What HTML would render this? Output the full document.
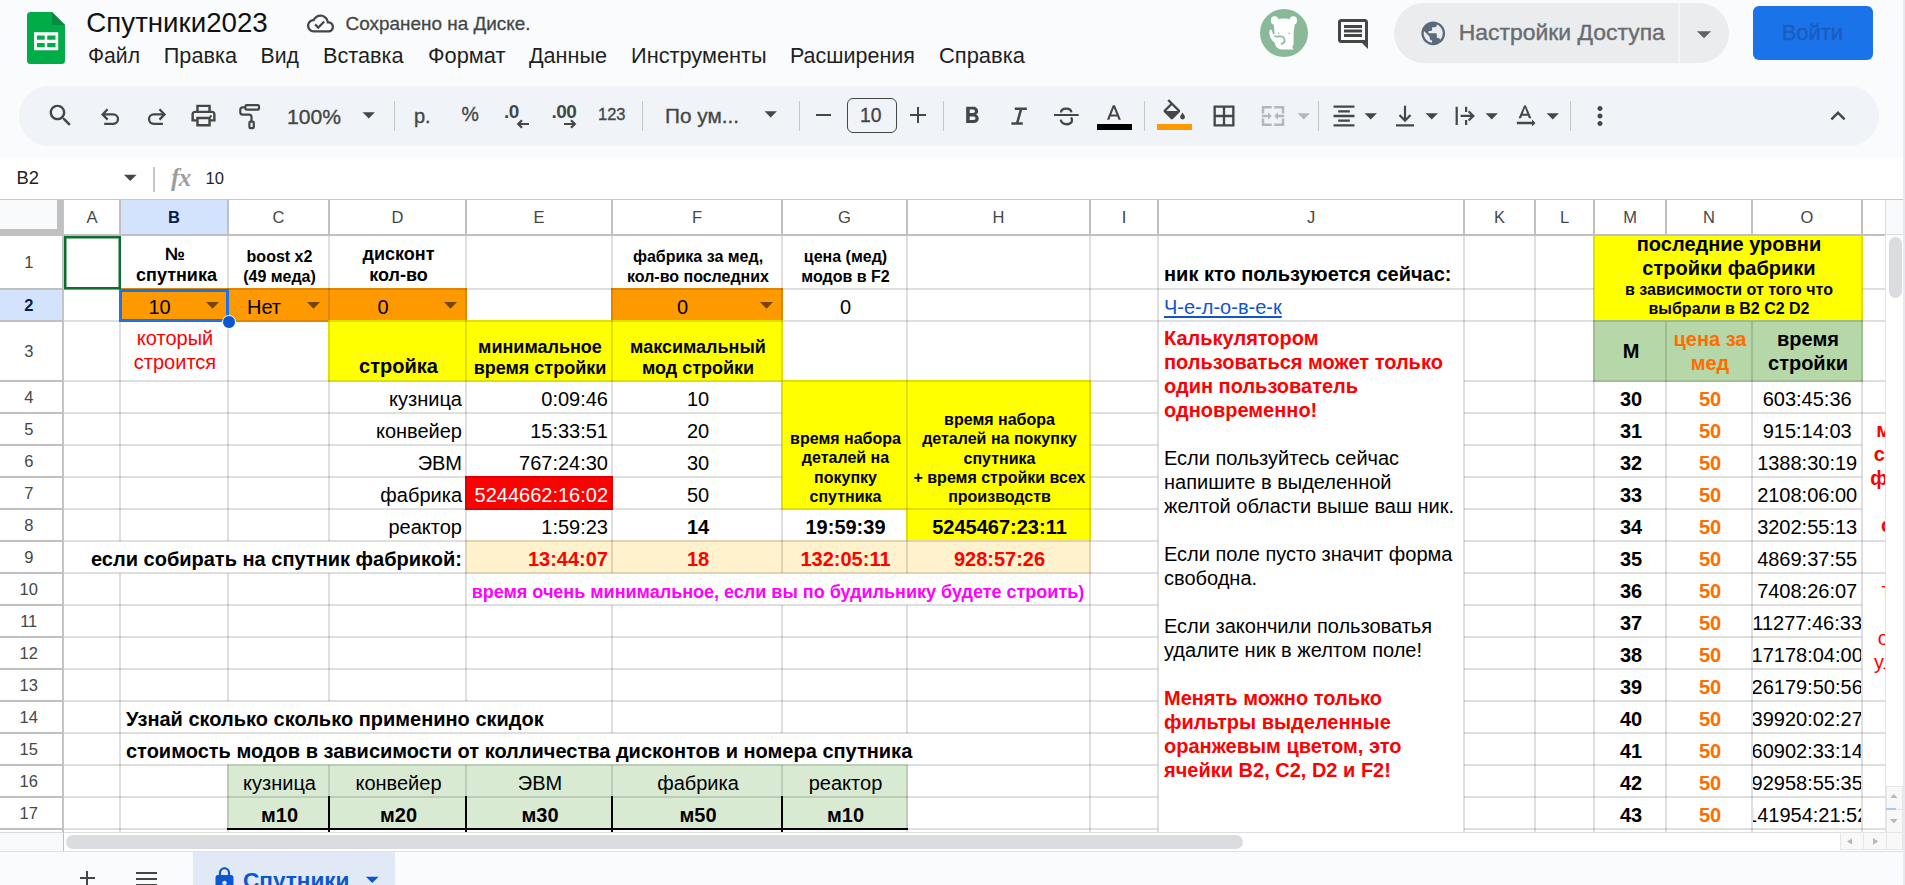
<!DOCTYPE html><html lang="ru"><head><meta charset="utf-8"><title>Спутники2023 - Google Таблицы</title><style>
html,body{margin:0;padding:0}
body{width:1905px;height:885px;overflow:hidden;background:#f9fbfd;position:relative;font-family:"Liberation Sans",sans-serif;color:#1f1f1f}
div,svg{position:absolute;box-sizing:border-box}
.t{white-space:nowrap;overflow:visible}
.g{background:rgba(0,0,0,.125)}
.hl{background:#c0c0c0}
#grid{left:0;top:0;width:1885px;height:832px;overflow:hidden}
</style></head><body>
<svg class="i" style="left:27px;top:12px" width="38" height="52" viewBox="0 0 38 52">
<path d="M3.5 0H25L38 13V48.5A3.5 3.5 0 0 1 34.5 52H3.5A3.5 3.5 0 0 1 0 48.5V3.5A3.5 3.5 0 0 1 3.5 0Z" fill="#00ac47"/>
<path d="M25 0L38 13H25Z" fill="#098a3c"/>
<path d="M7 20.2H31.2V38.2H7Z M9.9 23.4V27.7H17.7V23.4Z M20.2 23.4V27.7H28.5V23.4Z M9.9 31V35.3H17.7V31Z M20.2 31V35.3H28.5V31Z" fill="#fff" fill-rule="evenodd"/>
</svg>
<div class="t" style="left:86.3px;top:7px;height:31px;line-height:31px;font-size:27.7px;color:#111;white-space:nowrap;">Спутники2023</div>
<svg class="i" style="left:306.5px;top:9.5px;" width="27" height="27" viewBox="0 0 24 24" fill="#444746"><path d="M19.35 10.04C18.67 6.59 15.64 4 12 4 9.11 4 6.6 5.64 5.35 8.04 2.34 8.36 0 10.91 0 14c0 3.31 2.69 6 6 6h13c2.76 0 5-2.24 5-5 0-2.64-2.05-4.78-4.65-4.96zM19 18H6c-2.21 0-4-1.79-4-4 0-2.05 1.53-3.76 3.56-3.97l1.07-.11.5-.95C8.08 7.14 9.94 6 12 6c2.62 0 4.88 1.86 5.39 4.43l.3 1.5 1.53.11c1.56.1 2.78 1.41 2.78 2.96 0 1.65-1.35 3-3 3zm-9-3.82l-2.09-2.09L6.5 13.5 10 17l6.01-6.01-1.41-1.41z"/></svg>
<div class="t" style="left:345.6px;top:13px;height:21px;line-height:21px;font-size:18.91px;color:#444746;white-space:nowrap;-webkit-text-stroke:0.3px #444746;">Сохранено на Диске.</div>
<div class="t" style="left:88px;top:44px;height:23px;line-height:23px;font-size:21.15px;color:#1f1f1f;white-space:nowrap;">Файл</div>
<div class="t" style="left:163.8px;top:43px;height:25px;line-height:25px;font-size:21.67px;color:#1f1f1f;white-space:nowrap;">Правка</div>
<div class="t" style="left:260.6px;top:44px;height:23px;line-height:23px;font-size:21.23px;color:#1f1f1f;white-space:nowrap;">Вид</div>
<div class="t" style="left:323px;top:43px;height:25px;line-height:25px;font-size:21.71px;color:#1f1f1f;white-space:nowrap;">Вставка</div>
<div class="t" style="left:428px;top:43px;height:25px;line-height:25px;font-size:21.82px;color:#1f1f1f;white-space:nowrap;">Формат</div>
<div class="t" style="left:529px;top:43px;height:25px;line-height:25px;font-size:21.59px;color:#1f1f1f;white-space:nowrap;">Данные</div>
<div class="t" style="left:631px;top:43px;height:25px;line-height:25px;font-size:21.75px;color:#1f1f1f;white-space:nowrap;">Инструменты</div>
<div class="t" style="left:790px;top:44px;height:24px;line-height:24px;font-size:21.49px;color:#1f1f1f;white-space:nowrap;">Расширения</div>
<div class="t" style="left:939px;top:43px;height:25px;line-height:25px;font-size:21.92px;color:#1f1f1f;white-space:nowrap;">Справка</div>
<svg class="i" style="left:1260px;top:9px" width="48" height="48" viewBox="0 0 48 48">
<circle cx="24" cy="24" r="24" fill="#8ab99a"/>
<g fill="#fff">
<ellipse cx="14.6" cy="11.400" rx="3.700" ry="4.200"/><ellipse cx="33.300" cy="11.400" rx="3.700" ry="4.200"/>
<path d="M13.5 13.5C16 8.300 31.5 8.300 34 13.5C35.5 18 33.6 20 33.6 24V34.5C33.6 36 32.6 36.6 32.4 37.6C32.2 38.8 33.6 39.4 33.4 40.6H22C17 40 15.4 37 14.6 33.5C10.5 31 8.6 25.5 9.6 21.6C10.2 20 12.2 20.6 12.2 22.2C12.6 25.5 14.6 26.6 14.6 24Z"/>
</g>
<path d="M15 27.2C18 28.6 20 26.2 22.6 27.8C25.4 29.6 25.6 33.6 21.4 35" fill="none" stroke="#8ab99a" stroke-width="1.7" stroke-linecap="round"/>
<circle cx="18.6" cy="24.2" r=".8" fill="#8ab99a"/><circle cx="29.2" cy="24.2" r=".8" fill="#8ab99a"/>
</svg>
<svg class="i" style="left:1335px;top:16px;" width="36" height="36" viewBox="0 0 24 24" fill="#444746"><path d="M21.99 4c0-1.1-.89-2-1.99-2H4c-1.1 0-2 .9-2 2v12c0 1.1.9 2 2 2h14l4 4-.01-18zM20 4v12H4V4h16zM6 12h12v2H6zm0-3h12v2H6zm0-3h12v2H6z"/></svg>
<div style="left:1394px;top:3px;width:335px;height:60px;background:#ebecee;border-radius:30px"></div>
<div style="left:1678px;top:3px;width:1.5px;height:60px;background:#f4f5f7"></div>
<svg class="i" style="left:1418.75px;top:18.75px;" width="28.5" height="28.5" viewBox="0 0 24 24" fill="#5a6a7d"><path d="M12 2C6.48 2 2 6.48 2 12s4.48 10 10 10 10-4.48 10-10S17.52 2 12 2zm-1 17.93c-3.95-.49-7-3.85-7-7.93 0-.62.08-1.21.21-1.79L9 15v1c0 1.1.9 2 2 2v1.93zm6.9-2.54c-.26-.81-1-1.39-1.9-1.39h-1v-3c0-.55-.45-1-1-1H8v-2h2c.55 0 1-.45 1-1V7h2c1.1 0 2-.9 2-2v-.41c2.93 1.19 5 4.06 5 7.41 0 2.08-.8 3.97-2.1 5.39z"/></svg>
<div class="t" style="left:1458.8px;top:19px;height:26px;line-height:26px;font-size:22.91px;color:#696c70;white-space:nowrap;-webkit-text-stroke:0.4px #696c70;">Настройки Доступа</div>
<svg class="i" style="left:1687.0px;top:16.5px;" width="34" height="34" viewBox="0 0 24 24" fill="#5f6368"><path d="M7 10l5 5 5-5z"/></svg>
<div style="left:1753px;top:6px;width:120px;height:54px;background:#1a73e8;border-radius:6px"></div>
<div class="t" style="left:1781.7px;top:20px;height:25px;line-height:25px;font-size:21.91px;color:#1b5bc4;white-space:nowrap;-webkit-text-stroke:0.4px #1b5bc4;">Войти</div>
<div style="left:19px;top:86px;width:1860px;height:60px;background:#f0f4f9;border-radius:30px"></div>
<svg class="i" style="left:46.0px;top:101.0px;" width="29" height="29" viewBox="0 0 24 24" fill="#444746"><path d="M15.5 14h-.79l-.28-.27C15.41 12.59 16 11.11 16 9.5 16 5.91 13.09 3 9.5 3S3 5.91 3 9.5 5.91 16 9.5 16c1.61 0 3.09-.59 4.23-1.57l.27.28v.79l5 4.99L20.49 19l-4.99-5zm-6 0C7.01 14 5 11.99 5 9.5S7.01 5 9.5 5 14 7.01 14 9.5 11.99 14 9.5 14z"/></svg>
<svg class="i" style="left:95px;top:100px" width="30" height="32" viewBox="95 100 30 32"><g fill="none" stroke="#444746" stroke-width="2.3"><path d="M107.6 109.2L102.6 114.4l5 5.2"/><path d="M102.8 114.4H113.3a4.7 4.7 0 0 1 0 9.4H104.2"/></g></svg>
<svg class="i" style="left:142px;top:100px" width="30" height="32" viewBox="142 100 30 32"><g fill="none" stroke="#444746" stroke-width="2.3"><path d="M159.5 109.2L164.5 114.4l-5 5.2"/><path d="M164.300 114.4H153.7a4.7 4.7 0 0 0 0 9.4H162.900"/></g></svg>
<svg class="i" style="left:189.0px;top:100.7px;" width="29" height="29" viewBox="0 0 24 24" fill="#444746"><path d="M19 8h-1V3H6v5H5c-1.66 0-3 1.34-3 3v6h4v4h12v-4h4v-6c0-1.66-1.34-3-3-3zM8 5h8v3H8V5zm8 12v2H8v-4h8v2zm2-2v-2H6v2H4v-4c0-.55.45-1 1-1h14c.55 0 1 .45 1 1v4h-2z M18 11.5a1 1 0 1 0 .001 0z"/></svg>
<svg class="i" style="left:236px;top:100px" width="30" height="32" viewBox="236 100 30 32"><g fill="none" stroke="#444746" stroke-width="2.2"><rect x="245.400" y="105.100" width="13.600" height="4.600" rx="1.300"/><path d="M245.400 107.400H242.700a2.400 2.400 0 0 0 -2.400 2.400v2.500a2.400 2.400 0 0 0 2.400 2.400H249.100a2.400 2.400 0 0 1 2.400 2.400V121"/><rect x="249.400" y="121.600" width="4.400" height="6.500" rx="1.100"/></g></svg>
<div class="t" style="left:287px;top:105px;height:23px;line-height:23px;font-size:21.11px;color:#444746;white-space:nowrap;-webkit-text-stroke:0.35px #444746;">100%</div>
<svg class="i" style="left:354.25px;top:99.75px;" width="29.5" height="29.5" viewBox="0 0 24 24" fill="#444746"><path d="M7 10l5 5 5-5z"/></svg>
<div style="left:394.0px;top:101px;width:1.0px;height:30px;background:#c7c7c7"></div>
<div class="t" style="left:414px;top:105px;height:22px;line-height:22px;font-size:20px;color:#444746;white-space:nowrap;-webkit-text-stroke:0.35px #444746;">р.</div>
<div class="t" style="left:461.4px;top:103px;height:22px;line-height:22px;font-size:19.5px;color:#444746;white-space:nowrap;-webkit-text-stroke:0.35px #444746;">%</div>
<div class="t" style="left:504px;top:101px;height:21px;line-height:21px;font-size:19px;color:#444746;white-space:nowrap;font-weight:700;letter-spacing:-0.5px;">.0</div>
<svg class="i" style="left:516px;top:118px" width="14" height="12" viewBox="0 0 14 12"><path d="M13 6H2.5M6 2.2L2.2 6 6 9.8" fill="none" stroke="#444746" stroke-width="2.200"/></svg>
<div class="t" style="left:551.5px;top:101px;height:21px;line-height:21px;font-size:19px;color:#444746;white-space:nowrap;font-weight:700;letter-spacing:-0.5px;">.00</div>
<svg class="i" style="left:563px;top:118px" width="14" height="12" viewBox="0 0 14 12"><path d="M1 6H11.5M8 2.2L11.8 6 8 9.8" fill="none" stroke="#444746" stroke-width="2.200"/></svg>
<div class="t" style="left:598px;top:105px;height:18px;line-height:18px;font-size:16.48px;color:#444746;white-space:nowrap;-webkit-text-stroke:0.35px #444746;">123</div>
<div style="left:642.0px;top:101px;width:1.0px;height:30px;background:#c7c7c7"></div>
<div class="t" style="left:665px;top:104px;height:23px;line-height:23px;font-size:20.77px;color:#444746;white-space:nowrap;-webkit-text-stroke:0.35px #444746;">По ум...</div>
<svg class="i" style="left:756.25px;top:98.75px;" width="29.5" height="29.5" viewBox="0 0 24 24" fill="#444746"><path d="M7 10l5 5 5-5z"/></svg>
<div style="left:799.0px;top:101px;width:1.0px;height:30px;background:#c7c7c7"></div>
<div style="left:815.5px;top:114px;width:15.0px;height:2px;background:#444746"></div>
<div style="left:847px;top:98px;width:50px;height:35px;border:1.5px solid #444746;border-radius:6px"></div>
<div class="t" style="left:860px;top:105px;height:21px;line-height:21px;font-size:19.33px;color:#444746;white-space:nowrap;-webkit-text-stroke:0.35px #444746;">10</div>
<div style="left:910px;top:114px;width:16px;height:2px;background:#444746"></div>
<div style="left:917px;top:107px;width:2px;height:16px;background:#444746"></div>
<div style="left:943.0px;top:101px;width:1.0px;height:30px;background:#c7c7c7"></div>
<svg class="i" style="left:957.5px;top:101.5px;" width="28" height="28" viewBox="0 0 24 24" fill="#444746"><path d="M15.6 10.79c.97-.67 1.65-1.77 1.65-2.79 0-2.26-1.75-4-4-4H7v14h7.04c2.09 0 3.71-1.7 3.71-3.79 0-1.52-.86-2.82-2.15-3.42zM10 6.5h3c.83 0 1.5.67 1.5 1.5s-.67 1.5-1.5 1.5h-3v-3zm3.500 9H10v-3h3.5c.83 0 1.500.67 1.500 1.500s-.67 1.500-1.500 1.500z"/></svg>
<svg class="i" style="left:1005px;top:100px" width="30" height="32" viewBox="1005 100 30 32"><g fill="none" stroke="#444746" stroke-width="2.5"><path d="M1014.800 108.700H1026.800M1011.400 123.600H1022.800M1021.200 108.700L1017 123.600"/></g></svg>
<svg class="i" style="left:1050px;top:100px" width="32" height="32" viewBox="1050 100 32 32"><g fill="none" stroke="#444746" stroke-width="2.300"><path d="M1054 115H1078.700" stroke-width="2"/><path d="M1071.400 112.300C1071 107.300 1061.300 107.300 1061 112.500"/><path d="M1060.800 119.700C1061.200 125.700 1072 125.700 1072 120.200C1072 119 1071.600 118.200 1071 117.500"/></g></svg>
<svg class="i" style="left:1100.7px;top:102.300px" width="25.800" height="25" viewBox="0 0 24 24" preserveAspectRatio="none" fill="#444746"><path d="M11 3L5.5 17h2.250l1.120-3h6.250l1.120 3h2.250L13 3h-2zm-1.380 9L12 5.670 14.380 12H9.620z"/></svg>
<div style="left:1097px;top:124px;width:35px;height:6px;background:#000"></div>
<div style="left:1144.0px;top:101px;width:1.0px;height:30px;background:#c7c7c7"></div>
<svg class="i" style="left:1159.7px;top:98.4px;" width="28.5" height="28.5" viewBox="0 -1 24 24" fill="#444746"><path d="M16.560 8.940L7.620 0 6.210 1.410l2.380 2.380-5.150 5.150c-.590.590-.590 1.540 0 2.120l5.500 5.500c.290.290.680.440 1.060.440s.770-.150 1.060-.440l5.500-5.500c.590-.580.590-1.530 0-2.120zM5.210 10L10 5.210 14.790 10H5.210zM19 11.500s-2 2.170-2 3.500c0 1.100.900 2 2 2s2-.900 2-2c0-1.330-2-3.500-2-3.500z"/></svg>
<div style="left:1157px;top:124px;width:35px;height:6px;background:#ff9900"></div>
<svg class="i" style="left:1210.0px;top:102.0px;" width="28" height="28" viewBox="0 0 24 24" fill="#444746"><path d="M3 3v18h18V3H3zm8 16H5v-6h6v6zm0-8H5V5h6v6zm8 8h-6v-6h6v6zm0-8h-6V5h6v6z"/></svg>
<svg class="i" style="left:1258.0px;top:101.0px;" width="30" height="30" viewBox="0 0 24 24" fill="#b4b8bd"><path d="M5 10H3V4h8v2H5v4zm14 8h-6v2h8v-6h-2v4zM5 18v-4H3v6h8v-2H5zM21 4h-8v2h6v4h2V4zM8 13v2l3-3-3-3v2H3v2h5zm8-2V9l-3 3 3 3v-2h5v-2h-5z"/></svg>
<svg class="i" style="left:1288.75px;top:100.75px;" width="29.5" height="29.5" viewBox="0 0 24 24" fill="#b4b8bd"><path d="M7 10l5 5 5-5z"/></svg>
<div style="left:1318.0px;top:101px;width:1.0px;height:30px;background:#c7c7c7"></div>
<svg class="i" style="left:1330.0px;top:102.0px;" width="28" height="28" viewBox="0 0 24 24" fill="#444746"><path d="M7 15v2h10v-2H7zm-4 6h18v-2H3v2zm0-8h18v-2H3v2zm4-6v2h10V7H7zM3 3v2h18V3H3z"/></svg>
<svg class="i" style="left:1356.25px;top:100.75px;" width="29.5" height="29.5" viewBox="0 0 24 24" fill="#444746"><path d="M7 10l5 5 5-5z"/></svg>
<svg class="i" style="left:1390px;top:100px" width="30" height="32" viewBox="1390 100 30 32"><g fill="none" stroke="#444746" stroke-width="2.200"><path d="M1405 105.700V120.500M1399.500 115L1405 120.700 1410.500 115M1396 125.300H1414"/></g></svg>
<svg class="i" style="left:1417.25px;top:100.75px;" width="29.5" height="29.5" viewBox="0 0 24 24" fill="#444746"><path d="M7 10l5 5 5-5z"/></svg>
<svg class="i" style="left:1450px;top:100px" width="30" height="32" viewBox="1450 100 30 32"><g fill="none" stroke="#444746" stroke-width="2.200"><path d="M1456.700 106.800V124.900M1466.100 106.800V112M1466.100 119.900V124.900M1460.600 115.900H1473M1468.600 111.300L1473.300 115.900 1468.600 120.500"/></g></svg>
<svg class="i" style="left:1477.25px;top:100.75px;" width="29.5" height="29.5" viewBox="0 0 24 24" fill="#444746"><path d="M7 10l5 5 5-5z"/></svg>
<svg class="i" style="left:1511.0px;top:102.0px;" width="28" height="28" viewBox="0 0 24 24" fill="#444746"><path d="M21 18l-3-3v2H5v2h13v2l3-3zM9.500 11.800h5l.900 2.200h2.100L12.750 3h-1.500L6.500 14h2.100l.900-2.200zM12 4.980L13.870 10h-3.740L12 4.980z"/></svg>
<svg class="i" style="left:1538.25px;top:100.75px;" width="29.5" height="29.5" viewBox="0 0 24 24" fill="#444746"><path d="M7 10l5 5 5-5z"/></svg>
<div style="left:1569.9px;top:101px;width:1.0px;height:30px;background:#c7c7c7"></div>
<svg class="i" style="left:1584.5px;top:101.0px;" width="30" height="30" viewBox="0 0 24 24" fill="#444746"><path d="M12 8c1.100 0 2-.900 2-2s-.900-2-2-2-2 .900-2 2 .900 2 2 2zm0 2c-1.100 0-2 .900-2 2s.900 2 2 2 2-.900 2-2-.900-2-2-2zm0 6c-1.100 0-2 .900-2 2s.900 2 2 2 2-.900 2-2-.900-2-2-2z"/></svg>
<svg class="i" style="left:1823.0px;top:101.0px;" width="30" height="30" viewBox="0 0 24 24" fill="#444746"><path d="M12 8l-6 6 1.410 1.410L12 10.830l4.590 4.580L18 14z"/></svg>
<div style="left:0px;top:158px;width:1903px;height:41px;background:#fff"></div>
<div class="t" style="left:16.5px;top:167px;height:21px;line-height:21px;font-size:18.39px;color:#1f1f1f;white-space:nowrap;">B2</div>
<svg class="i" style="left:114.75px;top:162.05px;" width="30.5" height="30.5" viewBox="0 0 24 24" fill="#444746"><path d="M7 10l5 5 5-5z"/></svg>
<div style="left:153px;top:167px;width:2px;height:25px;background:#c7c7c7"></div>
<div class="t" style="left:171px;top:164px;font-family:'Liberation Serif','DejaVu Serif',serif;font-style:italic;font-weight:700;font-size:25px;line-height:28px;color:#9e9e9e;letter-spacing:-0.5px">fx</div>
<div class="t" style="left:205.5px;top:169px;height:19px;line-height:19px;font-size:16.63px;color:#1f1f1f;white-space:nowrap;">10</div>
<div id="grid">
<div style="left:0px;top:199px;width:1886px;height:633px;background:#fff"></div>
<div style="left:119px;top:288px;width:110px;height:34px;background:#ff9900"></div>
<div style="left:227px;top:288px;width:103px;height:34px;background:#ff9900"></div>
<div style="left:328px;top:288px;width:139px;height:34px;background:#ff9900"></div>
<div style="left:611px;top:288px;width:172px;height:34px;background:#ff9900"></div>
<div style="left:328px;top:320px;width:455px;height:62px;background:#ffff00"></div>
<div style="left:781px;top:380px;width:127px;height:130px;background:#ffff00"></div>
<div style="left:906px;top:380px;width:185px;height:162px;background:#ffff00"></div>
<div style="left:465px;top:476px;width:148px;height:34px;background:#ff0000"></div>
<div style="left:465px;top:540px;width:626px;height:34px;background:#fff2cc"></div>
<div style="left:1593px;top:234px;width:270px;height:88px;background:#ffff00"></div>
<div style="left:1593px;top:320px;width:270px;height:62px;background:#b6d7a8"></div>
<div style="left:227px;top:764px;width:681px;height:66px;background:#d9ead3"></div>
<div class="g" style="left:119px;top:235px;width:2px;height:306px;"></div>
<div class="g" style="left:119px;top:573px;width:2px;height:259px;"></div>
<div class="g" style="left:227px;top:235px;width:2px;height:306px;"></div>
<div class="g" style="left:227px;top:573px;width:2px;height:128px;"></div>
<div class="g" style="left:227px;top:765px;width:2px;height:67px;"></div>
<div class="g" style="left:328px;top:235px;width:2px;height:306px;"></div>
<div class="g" style="left:328px;top:573px;width:2px;height:128px;"></div>
<div class="g" style="left:328px;top:765px;width:2px;height:67px;"></div>
<div class="g" style="left:465px;top:235px;width:2px;height:466px;"></div>
<div class="g" style="left:465px;top:765px;width:2px;height:67px;"></div>
<div class="g" style="left:611px;top:235px;width:2px;height:338px;"></div>
<div class="g" style="left:611px;top:605px;width:2px;height:128px;"></div>
<div class="g" style="left:611px;top:765px;width:2px;height:67px;"></div>
<div class="g" style="left:781px;top:235px;width:2px;height:338px;"></div>
<div class="g" style="left:781px;top:605px;width:2px;height:128px;"></div>
<div class="g" style="left:781px;top:765px;width:2px;height:67px;"></div>
<div class="g" style="left:906px;top:235px;width:2px;height:338px;"></div>
<div class="g" style="left:906px;top:605px;width:2px;height:128px;"></div>
<div class="g" style="left:906px;top:765px;width:2px;height:67px;"></div>
<div class="g" style="left:1089px;top:235px;width:2px;height:597px;"></div>
<div class="g" style="left:1157px;top:235px;width:2px;height:597px;"></div>
<div class="g" style="left:1463px;top:235px;width:2px;height:597px;"></div>
<div class="g" style="left:1534px;top:235px;width:2px;height:597px;"></div>
<div class="g" style="left:1593px;top:235px;width:2px;height:597px;"></div>
<div class="g" style="left:1665px;top:321px;width:2px;height:511px;"></div>
<div class="g" style="left:1751px;top:321px;width:2px;height:511px;"></div>
<div class="g" style="left:1861px;top:235px;width:2px;height:597px;"></div>
<div class="g" style="left:64px;top:288px;width:1530px;height:2px;"></div>
<div class="g" style="left:1862px;top:288px;width:24px;height:2px;"></div>
<div class="g" style="left:64px;top:320px;width:1822px;height:2px;"></div>
<div class="g" style="left:64px;top:380px;width:1094px;height:2px;"></div>
<div class="g" style="left:1464px;top:380px;width:422px;height:2px;"></div>
<div class="g" style="left:64px;top:412px;width:718px;height:2px;"></div>
<div class="g" style="left:1090px;top:412px;width:68px;height:2px;"></div>
<div class="g" style="left:1464px;top:412px;width:422px;height:2px;"></div>
<div class="g" style="left:64px;top:444px;width:718px;height:2px;"></div>
<div class="g" style="left:1090px;top:444px;width:68px;height:2px;"></div>
<div class="g" style="left:1464px;top:444px;width:398px;height:2px;"></div>
<div class="g" style="left:64px;top:476px;width:718px;height:2px;"></div>
<div class="g" style="left:1090px;top:476px;width:68px;height:2px;"></div>
<div class="g" style="left:1464px;top:476px;width:398px;height:2px;"></div>
<div class="g" style="left:64px;top:508px;width:1094px;height:2px;"></div>
<div class="g" style="left:1464px;top:508px;width:398px;height:2px;"></div>
<div class="g" style="left:64px;top:540px;width:1094px;height:2px;"></div>
<div class="g" style="left:1464px;top:540px;width:422px;height:2px;"></div>
<div class="g" style="left:64px;top:572px;width:1094px;height:2px;"></div>
<div class="g" style="left:1464px;top:572px;width:422px;height:2px;"></div>
<div class="g" style="left:64px;top:604px;width:1094px;height:2px;"></div>
<div class="g" style="left:1464px;top:604px;width:398px;height:2px;"></div>
<div class="g" style="left:64px;top:636px;width:1094px;height:2px;"></div>
<div class="g" style="left:1464px;top:636px;width:398px;height:2px;"></div>
<div class="g" style="left:64px;top:668px;width:1094px;height:2px;"></div>
<div class="g" style="left:1464px;top:668px;width:398px;height:2px;"></div>
<div class="g" style="left:64px;top:700px;width:1094px;height:2px;"></div>
<div class="g" style="left:1464px;top:700px;width:422px;height:2px;"></div>
<div class="g" style="left:64px;top:732px;width:1094px;height:2px;"></div>
<div class="g" style="left:1464px;top:732px;width:422px;height:2px;"></div>
<div class="g" style="left:64px;top:764px;width:1094px;height:2px;"></div>
<div class="g" style="left:1464px;top:764px;width:422px;height:2px;"></div>
<div class="g" style="left:64px;top:796px;width:1094px;height:2px;"></div>
<div class="g" style="left:1464px;top:796px;width:422px;height:2px;"></div>
<div class="g" style="left:64px;top:828px;width:1094px;height:2px;"></div>
<div class="g" style="left:1464px;top:828px;width:422px;height:2px;"></div>
<div style="left:328px;top:796px;width:2px;height:36px;background:#000"></div>
<div style="left:465px;top:796px;width:2px;height:36px;background:#000"></div>
<div style="left:611px;top:796px;width:2px;height:36px;background:#000"></div>
<div style="left:781px;top:796px;width:2px;height:36px;background:#000"></div>
<div style="left:227px;top:827.5px;width:681px;height:2.5px;background:#000"></div>
<div class="t" style="left:121px;top:244px;width:108px;height:20px;line-height:20px;font-size:18px;text-align:center;color:#000;font-weight:700;">№</div>
<div class="t" style="left:121px;top:265px;width:108px;height:20px;line-height:20px;font-size:18px;text-align:center;color:#000;font-weight:700;padding-left:3px;">спутника</div>
<div class="t" style="left:229px;top:248px;width:101px;height:17px;line-height:17px;font-size:16px;text-align:center;color:#000;font-weight:700;">boost x2</div>
<div class="t" style="left:229px;top:268px;width:101px;height:17px;line-height:17px;font-size:16px;text-align:center;color:#000;font-weight:700;">(49 меда)</div>
<div class="t" style="left:330px;top:244px;width:137px;height:20px;line-height:20px;font-size:18px;text-align:center;color:#000;font-weight:700;">дисконт</div>
<div class="t" style="left:330px;top:265px;width:137px;height:20px;line-height:20px;font-size:18px;text-align:center;color:#000;font-weight:700;">кол-во</div>
<div class="t" style="left:613px;top:248px;width:170px;height:17px;line-height:17px;font-size:16px;text-align:center;color:#000;font-weight:700;">фабрика за мед,</div>
<div class="t" style="left:613px;top:268px;width:170px;height:17px;line-height:17px;font-size:16px;text-align:center;color:#000;font-weight:700;">кол-во последних</div>
<div class="t" style="left:783px;top:248px;width:125px;height:17px;line-height:17px;font-size:16px;text-align:center;color:#000;font-weight:700;">цена (мед)</div>
<div class="t" style="left:783px;top:268px;width:125px;height:17px;line-height:17px;font-size:16px;text-align:center;color:#000;font-weight:700;">модов в F2</div>
<div class="t" style="left:1159px;top:263px;width:306px;height:22px;line-height:22px;font-size:20px;text-align:left;color:#000;font-weight:700;padding-left:5px;">ник кто пользуюется сейчас:</div>
<div class="t" style="left:1595px;top:233px;width:268px;height:22px;line-height:22px;font-size:20px;text-align:center;color:#000;font-weight:700;">последние уровни</div>
<div class="t" style="left:1595px;top:257px;width:268px;height:22px;line-height:22px;font-size:20px;text-align:center;color:#000;font-weight:700;">стройки фабрики</div>
<div class="t" style="left:1595px;top:281px;width:268px;height:17px;line-height:17px;font-size:16px;text-align:center;color:#000;font-weight:700;">в зависимости от того что</div>
<div class="t" style="left:1595px;top:300px;width:268px;height:17px;line-height:17px;font-size:16px;text-align:center;color:#000;font-weight:700;">выбрали в B2 C2 D2</div>
<div class="t" style="left:121px;top:296px;width:77px;height:22px;line-height:22px;font-size:20px;text-align:center;color:#000;">10</div>
<div class="t" style="left:229px;top:296px;width:70px;height:22px;line-height:22px;font-size:20px;text-align:center;color:#000;">Нет</div>
<div class="t" style="left:330px;top:296px;width:106px;height:22px;line-height:22px;font-size:20px;text-align:center;color:#000;">0</div>
<div class="t" style="left:613px;top:296px;width:139px;height:22px;line-height:22px;font-size:20px;text-align:center;color:#000;">0</div>
<div class="t" style="left:783px;top:296px;width:125px;height:22px;line-height:22px;font-size:20px;text-align:center;color:#000;">0</div>
<div class="t" style="left:1159px;top:296px;width:306px;height:22px;line-height:22px;font-size:20px;text-align:left;color:#1155cc;padding-left:5px;text-decoration:underline;text-decoration-thickness:1.5px;text-underline-offset:1.5px;">Ч-е-л-о-в-е-к</div>
<svg class="i" style="left:206px;top:302px" width="13" height="7" viewBox="0 0 13 7"><path d="M0 0H13L6.5 6.8Z" fill="#734500"/></svg>
<svg class="i" style="left:307px;top:302px" width="13" height="7" viewBox="0 0 13 7"><path d="M0 0H13L6.5 6.8Z" fill="#734500"/></svg>
<svg class="i" style="left:444px;top:302px" width="13" height="7" viewBox="0 0 13 7"><path d="M0 0H13L6.5 6.8Z" fill="#734500"/></svg>
<svg class="i" style="left:760px;top:302px" width="13" height="7" viewBox="0 0 13 7"><path d="M0 0H13L6.5 6.8Z" fill="#734500"/></svg>
<div class="t" style="left:121px;top:327px;width:108px;height:22px;line-height:22px;font-size:20px;text-align:center;color:#ff0000;">который</div>
<div class="t" style="left:121px;top:351px;width:108px;height:22px;line-height:22px;font-size:20px;text-align:center;color:#ff0000;">строится</div>
<div class="t" style="left:330px;top:355px;width:137px;height:22px;line-height:22px;font-size:20px;text-align:center;color:#000;font-weight:700;">стройка</div>
<div class="t" style="left:467px;top:337px;width:146px;height:20px;line-height:20px;font-size:18px;text-align:center;color:#000;font-weight:700;">минимальное</div>
<div class="t" style="left:467px;top:358px;width:146px;height:20px;line-height:20px;font-size:18px;text-align:center;color:#000;font-weight:700;">время стройки</div>
<div class="t" style="left:613px;top:337px;width:170px;height:20px;line-height:20px;font-size:18px;text-align:center;color:#000;font-weight:700;">максимальный</div>
<div class="t" style="left:613px;top:358px;width:170px;height:20px;line-height:20px;font-size:18px;text-align:center;color:#000;font-weight:700;">мод стройки</div>
<div class="t" style="left:1595px;top:340px;width:72px;height:22px;line-height:22px;font-size:20px;text-align:center;color:#000;font-weight:700;">М</div>
<div class="t" style="left:1667px;top:328px;width:86px;height:22px;line-height:22px;font-size:20px;text-align:center;color:#ff6d01;font-weight:700;">цена за</div>
<div class="t" style="left:1667px;top:352px;width:86px;height:22px;line-height:22px;font-size:20px;text-align:center;color:#ff6d01;font-weight:700;">мед</div>
<div class="t" style="left:1753px;top:328px;width:110px;height:22px;line-height:22px;font-size:20px;text-align:center;color:#000;font-weight:700;">время</div>
<div class="t" style="left:1753px;top:352px;width:110px;height:22px;line-height:22px;font-size:20px;text-align:center;color:#000;font-weight:700;">стройки</div>
<div class="t" style="left:330px;top:388px;width:137px;height:22px;line-height:22px;font-size:20px;text-align:right;color:#000;padding-right:5px;">кузница</div>
<div class="t" style="left:467px;top:388px;width:146px;height:22px;line-height:22px;font-size:20px;text-align:right;color:#000;padding-right:5px;">0:09:46</div>
<div class="t" style="left:613px;top:388px;width:170px;height:22px;line-height:22px;font-size:20px;text-align:center;color:#000;">10</div>
<div class="t" style="left:330px;top:420px;width:137px;height:22px;line-height:22px;font-size:20px;text-align:right;color:#000;padding-right:5px;">конвейер</div>
<div class="t" style="left:467px;top:420px;width:146px;height:22px;line-height:22px;font-size:20px;text-align:right;color:#000;padding-right:5px;">15:33:51</div>
<div class="t" style="left:613px;top:420px;width:170px;height:22px;line-height:22px;font-size:20px;text-align:center;color:#000;">20</div>
<div class="t" style="left:330px;top:452px;width:137px;height:22px;line-height:22px;font-size:20px;text-align:right;color:#000;padding-right:5px;">ЭВМ</div>
<div class="t" style="left:467px;top:452px;width:146px;height:22px;line-height:22px;font-size:20px;text-align:right;color:#000;padding-right:5px;">767:24:30</div>
<div class="t" style="left:613px;top:452px;width:170px;height:22px;line-height:22px;font-size:20px;text-align:center;color:#000;">30</div>
<div class="t" style="left:330px;top:484px;width:137px;height:22px;line-height:22px;font-size:20px;text-align:right;color:#000;padding-right:5px;">фабрика</div>
<div class="t" style="left:467px;top:484px;width:146px;height:22px;line-height:22px;font-size:20px;text-align:right;color:#fff;padding-right:5px;">5244662:16:02</div>
<div class="t" style="left:613px;top:484px;width:170px;height:22px;line-height:22px;font-size:20px;text-align:center;color:#000;">50</div>
<div class="t" style="left:330px;top:516px;width:137px;height:22px;line-height:22px;font-size:20px;text-align:right;color:#000;padding-right:5px;">реактор</div>
<div class="t" style="left:467px;top:516px;width:146px;height:22px;line-height:22px;font-size:20px;text-align:right;color:#000;padding-right:5px;">1:59:23</div>
<div class="t" style="left:613px;top:516px;width:170px;height:22px;line-height:22px;font-size:20px;text-align:center;color:#000;font-weight:700;">14</div>
<div class="t" style="left:783px;top:430px;width:125px;height:17px;line-height:17px;font-size:16px;text-align:center;color:#000;font-weight:700;">время набора</div>
<div class="t" style="left:783px;top:449px;width:125px;height:17px;line-height:17px;font-size:16px;text-align:center;color:#000;font-weight:700;">деталей на</div>
<div class="t" style="left:783px;top:469px;width:125px;height:17px;line-height:17px;font-size:16px;text-align:center;color:#000;font-weight:700;">покупку</div>
<div class="t" style="left:783px;top:488px;width:125px;height:17px;line-height:17px;font-size:16px;text-align:center;color:#000;font-weight:700;">спутника</div>
<div class="t" style="left:908px;top:411px;width:183px;height:17px;line-height:17px;font-size:16px;text-align:center;color:#000;font-weight:700;">время набора</div>
<div class="t" style="left:908px;top:430px;width:183px;height:17px;line-height:17px;font-size:16px;text-align:center;color:#000;font-weight:700;">деталей на покупку</div>
<div class="t" style="left:908px;top:450px;width:183px;height:17px;line-height:17px;font-size:16px;text-align:center;color:#000;font-weight:700;">спутника</div>
<div class="t" style="left:908px;top:469px;width:183px;height:17px;line-height:17px;font-size:16px;text-align:center;color:#000;font-weight:700;">+ время стройки всех</div>
<div class="t" style="left:908px;top:488px;width:183px;height:17px;line-height:17px;font-size:16px;text-align:center;color:#000;font-weight:700;">производств</div>
<div class="t" style="left:783px;top:516px;width:125px;height:22px;line-height:22px;font-size:20px;text-align:center;color:#000;font-weight:700;">19:59:39</div>
<div class="t" style="left:908px;top:516px;width:183px;height:22px;line-height:22px;font-size:20px;text-align:center;color:#000;font-weight:700;">5245467:23:11</div>
<div class="t" style="left:65px;top:548px;width:402px;height:22px;line-height:22px;font-size:20px;text-align:right;color:#000;font-weight:700;padding-right:5px;">если собирать на спутник фабрикой:</div>
<div class="t" style="left:467px;top:548px;width:146px;height:22px;line-height:22px;font-size:20px;text-align:right;color:#ff0000;font-weight:700;padding-right:5px;">13:44:07</div>
<div class="t" style="left:613px;top:548px;width:170px;height:22px;line-height:22px;font-size:20px;text-align:center;color:#ff0000;font-weight:700;">18</div>
<div class="t" style="left:783px;top:548px;width:125px;height:22px;line-height:22px;font-size:20px;text-align:center;color:#ff0000;font-weight:700;">132:05:11</div>
<div class="t" style="left:908px;top:548px;width:183px;height:22px;line-height:22px;font-size:20px;text-align:center;color:#ff0000;font-weight:700;">928:57:26</div>
<div class="t" style="left:467px;top:582px;width:624px;height:20px;line-height:20px;font-size:18px;text-align:left;color:#ff00ff;font-weight:700;padding-left:4.7px;">время очень минимальное, если вы по будильнику будете строить)</div>
<div class="t" style="left:121px;top:708px;width:970px;height:22px;line-height:22px;font-size:20px;text-align:left;color:#000;font-weight:700;padding-left:5px;">Узнай сколько сколько применино скидок</div>
<div class="t" style="left:121px;top:740px;width:970px;height:22px;line-height:22px;font-size:20px;text-align:left;color:#000;font-weight:700;padding-left:5px;">стоимость модов в зависимости от колличества дисконтов и номера спутника</div>
<div class="t" style="left:229px;top:772px;width:101px;height:22px;line-height:22px;font-size:20px;text-align:center;color:#000;">кузница</div>
<div class="t" style="left:229px;top:804px;width:101px;height:22px;line-height:22px;font-size:20px;text-align:center;color:#000;font-weight:700;">м10</div>
<div class="t" style="left:330px;top:772px;width:137px;height:22px;line-height:22px;font-size:20px;text-align:center;color:#000;">конвейер</div>
<div class="t" style="left:330px;top:804px;width:137px;height:22px;line-height:22px;font-size:20px;text-align:center;color:#000;font-weight:700;">м20</div>
<div class="t" style="left:467px;top:772px;width:146px;height:22px;line-height:22px;font-size:20px;text-align:center;color:#000;">ЭВМ</div>
<div class="t" style="left:467px;top:804px;width:146px;height:22px;line-height:22px;font-size:20px;text-align:center;color:#000;font-weight:700;">м30</div>
<div class="t" style="left:613px;top:772px;width:170px;height:22px;line-height:22px;font-size:20px;text-align:center;color:#000;">фабрика</div>
<div class="t" style="left:613px;top:804px;width:170px;height:22px;line-height:22px;font-size:20px;text-align:center;color:#000;font-weight:700;">м50</div>
<div class="t" style="left:783px;top:772px;width:125px;height:22px;line-height:22px;font-size:20px;text-align:center;color:#000;">реактор</div>
<div class="t" style="left:783px;top:804px;width:125px;height:22px;line-height:22px;font-size:20px;text-align:center;color:#000;font-weight:700;">м10</div>
<div class="t" style="left:1159px;top:327px;width:306px;height:22px;line-height:22px;font-size:20px;text-align:left;color:#ff0000;font-weight:700;padding-left:5px;">Калькулятором</div>
<div class="t" style="left:1159px;top:351px;width:306px;height:22px;line-height:22px;font-size:20px;text-align:left;color:#ff0000;font-weight:700;padding-left:5px;">пользоваться может только</div>
<div class="t" style="left:1159px;top:375px;width:306px;height:22px;line-height:22px;font-size:20px;text-align:left;color:#ff0000;font-weight:700;padding-left:5px;">один пользователь</div>
<div class="t" style="left:1159px;top:399px;width:306px;height:22px;line-height:22px;font-size:20px;text-align:left;color:#ff0000;font-weight:700;padding-left:5px;">одновременно!</div>
<div class="t" style="left:1159px;top:447px;width:306px;height:22px;line-height:22px;font-size:20px;text-align:left;color:#000;padding-left:5px;">Если пользуйтесь сейчас</div>
<div class="t" style="left:1159px;top:471px;width:306px;height:22px;line-height:22px;font-size:20px;text-align:left;color:#000;padding-left:5px;">напишите в выделенной</div>
<div class="t" style="left:1159px;top:495px;width:306px;height:22px;line-height:22px;font-size:20px;text-align:left;color:#000;padding-left:5px;">желтой области выше ваш ник.</div>
<div class="t" style="left:1159px;top:543px;width:306px;height:22px;line-height:22px;font-size:20px;text-align:left;color:#000;padding-left:5px;">Если поле пусто значит форма</div>
<div class="t" style="left:1159px;top:567px;width:306px;height:22px;line-height:22px;font-size:20px;text-align:left;color:#000;padding-left:5px;">свободна.</div>
<div class="t" style="left:1159px;top:615px;width:306px;height:22px;line-height:22px;font-size:20px;text-align:left;color:#000;padding-left:5px;">Если закончили пользоватья</div>
<div class="t" style="left:1159px;top:639px;width:306px;height:22px;line-height:22px;font-size:20px;text-align:left;color:#000;padding-left:5px;">удалите ник в желтом поле!</div>
<div class="t" style="left:1159px;top:687px;width:306px;height:22px;line-height:22px;font-size:20px;text-align:left;color:#ff0000;font-weight:700;padding-left:5px;">Менять можно только</div>
<div class="t" style="left:1159px;top:711px;width:306px;height:22px;line-height:22px;font-size:20px;text-align:left;color:#ff0000;font-weight:700;padding-left:5px;">фильтры выделенные</div>
<div class="t" style="left:1159px;top:735px;width:306px;height:22px;line-height:22px;font-size:20px;text-align:left;color:#ff0000;font-weight:700;padding-left:5px;">оранжевым цветом, это</div>
<div class="t" style="left:1159px;top:759px;width:306px;height:22px;line-height:22px;font-size:20px;text-align:left;color:#ff0000;font-weight:700;padding-left:5px;">ячейки B2, C2, D2 и F2!</div>
<div class="t" style="left:1595px;top:388px;width:72px;height:22px;line-height:22px;font-size:20px;text-align:center;color:#000;font-weight:700;">30</div>
<div class="t" style="left:1667px;top:388px;width:86px;height:22px;line-height:22px;font-size:20px;text-align:center;color:#ff6d01;font-weight:700;">50</div>
<div style="left:1753.2px;top:388px;width:108px;height:22px;overflow:hidden"><div class="t" style="left:-100px;width:308px;top:0;height:22px;line-height:22px;font-size:20px;text-align:center;color:#000">603:45:36</div></div>
<div class="t" style="left:1595px;top:420px;width:72px;height:22px;line-height:22px;font-size:20px;text-align:center;color:#000;font-weight:700;">31</div>
<div class="t" style="left:1667px;top:420px;width:86px;height:22px;line-height:22px;font-size:20px;text-align:center;color:#ff6d01;font-weight:700;">50</div>
<div style="left:1753.2px;top:420px;width:108px;height:22px;overflow:hidden"><div class="t" style="left:-100px;width:308px;top:0;height:22px;line-height:22px;font-size:20px;text-align:center;color:#000">915:14:03</div></div>
<div class="t" style="left:1595px;top:452px;width:72px;height:22px;line-height:22px;font-size:20px;text-align:center;color:#000;font-weight:700;">32</div>
<div class="t" style="left:1667px;top:452px;width:86px;height:22px;line-height:22px;font-size:20px;text-align:center;color:#ff6d01;font-weight:700;">50</div>
<div style="left:1753.2px;top:452px;width:108px;height:22px;overflow:hidden"><div class="t" style="left:-100px;width:308px;top:0;height:22px;line-height:22px;font-size:20px;text-align:center;color:#000">1388:30:19</div></div>
<div class="t" style="left:1595px;top:484px;width:72px;height:22px;line-height:22px;font-size:20px;text-align:center;color:#000;font-weight:700;">33</div>
<div class="t" style="left:1667px;top:484px;width:86px;height:22px;line-height:22px;font-size:20px;text-align:center;color:#ff6d01;font-weight:700;">50</div>
<div style="left:1753.2px;top:484px;width:108px;height:22px;overflow:hidden"><div class="t" style="left:-100px;width:308px;top:0;height:22px;line-height:22px;font-size:20px;text-align:center;color:#000">2108:06:00</div></div>
<div class="t" style="left:1595px;top:516px;width:72px;height:22px;line-height:22px;font-size:20px;text-align:center;color:#000;font-weight:700;">34</div>
<div class="t" style="left:1667px;top:516px;width:86px;height:22px;line-height:22px;font-size:20px;text-align:center;color:#ff6d01;font-weight:700;">50</div>
<div style="left:1753.2px;top:516px;width:108px;height:22px;overflow:hidden"><div class="t" style="left:-100px;width:308px;top:0;height:22px;line-height:22px;font-size:20px;text-align:center;color:#000">3202:55:13</div></div>
<div class="t" style="left:1595px;top:548px;width:72px;height:22px;line-height:22px;font-size:20px;text-align:center;color:#000;font-weight:700;">35</div>
<div class="t" style="left:1667px;top:548px;width:86px;height:22px;line-height:22px;font-size:20px;text-align:center;color:#ff6d01;font-weight:700;">50</div>
<div style="left:1753.2px;top:548px;width:108px;height:22px;overflow:hidden"><div class="t" style="left:-100px;width:308px;top:0;height:22px;line-height:22px;font-size:20px;text-align:center;color:#000">4869:37:55</div></div>
<div class="t" style="left:1595px;top:580px;width:72px;height:22px;line-height:22px;font-size:20px;text-align:center;color:#000;font-weight:700;">36</div>
<div class="t" style="left:1667px;top:580px;width:86px;height:22px;line-height:22px;font-size:20px;text-align:center;color:#ff6d01;font-weight:700;">50</div>
<div style="left:1753.2px;top:580px;width:108px;height:22px;overflow:hidden"><div class="t" style="left:-100px;width:308px;top:0;height:22px;line-height:22px;font-size:20px;text-align:center;color:#000">7408:26:07</div></div>
<div class="t" style="left:1595px;top:612px;width:72px;height:22px;line-height:22px;font-size:20px;text-align:center;color:#000;font-weight:700;">37</div>
<div class="t" style="left:1667px;top:612px;width:86px;height:22px;line-height:22px;font-size:20px;text-align:center;color:#ff6d01;font-weight:700;">50</div>
<div style="left:1753.2px;top:612px;width:108px;height:22px;overflow:hidden"><div class="t" style="left:-100px;width:308px;top:0;height:22px;line-height:22px;font-size:20px;text-align:center;color:#000">11277:46:33</div></div>
<div class="t" style="left:1595px;top:644px;width:72px;height:22px;line-height:22px;font-size:20px;text-align:center;color:#000;font-weight:700;">38</div>
<div class="t" style="left:1667px;top:644px;width:86px;height:22px;line-height:22px;font-size:20px;text-align:center;color:#ff6d01;font-weight:700;">50</div>
<div style="left:1753.2px;top:644px;width:108px;height:22px;overflow:hidden"><div class="t" style="left:-100px;width:308px;top:0;height:22px;line-height:22px;font-size:20px;text-align:center;color:#000">17178:04:00</div></div>
<div class="t" style="left:1595px;top:676px;width:72px;height:22px;line-height:22px;font-size:20px;text-align:center;color:#000;font-weight:700;">39</div>
<div class="t" style="left:1667px;top:676px;width:86px;height:22px;line-height:22px;font-size:20px;text-align:center;color:#ff6d01;font-weight:700;">50</div>
<div style="left:1753.2px;top:676px;width:108px;height:22px;overflow:hidden"><div class="t" style="left:-100px;width:308px;top:0;height:22px;line-height:22px;font-size:20px;text-align:center;color:#000">26179:50:56</div></div>
<div class="t" style="left:1595px;top:708px;width:72px;height:22px;line-height:22px;font-size:20px;text-align:center;color:#000;font-weight:700;">40</div>
<div class="t" style="left:1667px;top:708px;width:86px;height:22px;line-height:22px;font-size:20px;text-align:center;color:#ff6d01;font-weight:700;">50</div>
<div style="left:1753.2px;top:708px;width:108px;height:22px;overflow:hidden"><div class="t" style="left:-100px;width:308px;top:0;height:22px;line-height:22px;font-size:20px;text-align:center;color:#000">39920:02:27</div></div>
<div class="t" style="left:1595px;top:740px;width:72px;height:22px;line-height:22px;font-size:20px;text-align:center;color:#000;font-weight:700;">41</div>
<div class="t" style="left:1667px;top:740px;width:86px;height:22px;line-height:22px;font-size:20px;text-align:center;color:#ff6d01;font-weight:700;">50</div>
<div style="left:1753.2px;top:740px;width:108px;height:22px;overflow:hidden"><div class="t" style="left:-100px;width:308px;top:0;height:22px;line-height:22px;font-size:20px;text-align:center;color:#000">60902:33:14</div></div>
<div class="t" style="left:1595px;top:772px;width:72px;height:22px;line-height:22px;font-size:20px;text-align:center;color:#000;font-weight:700;">42</div>
<div class="t" style="left:1667px;top:772px;width:86px;height:22px;line-height:22px;font-size:20px;text-align:center;color:#ff6d01;font-weight:700;">50</div>
<div style="left:1753.2px;top:772px;width:108px;height:22px;overflow:hidden"><div class="t" style="left:-100px;width:308px;top:0;height:22px;line-height:22px;font-size:20px;text-align:center;color:#000">92958:55:35</div></div>
<div class="t" style="left:1595px;top:804px;width:72px;height:22px;line-height:22px;font-size:20px;text-align:center;color:#000;font-weight:700;">43</div>
<div class="t" style="left:1667px;top:804px;width:86px;height:22px;line-height:22px;font-size:20px;text-align:center;color:#ff6d01;font-weight:700;">50</div>
<div style="left:1753.2px;top:804px;width:108px;height:22px;overflow:hidden"><div class="t" style="left:-100px;width:308px;top:0;height:22px;line-height:22px;font-size:20px;text-align:center;color:#000">141954:21:52</div></div>
<div class="t" style="left:1876.3px;top:419px;height:22px;line-height:22px;font-size:20px;color:#ff0000;font-weight:700;">минимальное время</div>
<div class="t" style="left:1873.7px;top:443px;height:22px;line-height:22px;font-size:20px;color:#ff0000;font-weight:700;">стройки последних уровней</div>
<div class="t" style="left:1870.2px;top:467px;height:22px;line-height:22px;font-size:20px;color:#ff0000;font-weight:700;">фабрики при покупке за мед</div>
<div class="t" style="left:1880.9px;top:514px;height:22px;line-height:22px;font-size:20px;color:#ff0000;font-weight:700;">смотрите таблицу</div>
<div class="t" style="left:1881.6px;top:579px;height:22px;line-height:22px;font-size:20px;color:#ff0000;">также можно</div>
<div class="t" style="left:1877.8px;top:627px;height:22px;line-height:22px;font-size:20px;color:#ff0000;">оценить время</div>
<div class="t" style="left:1874px;top:651px;height:22px;line-height:22px;font-size:20px;color:#ff0000;">улучшения фабрики</div>
<svg class="i" style="left:60px;top:232px" width="66" height="62" viewBox="60 232 66 62"><rect x="65.250" y="237.250" width="54.500" height="51" fill="none" stroke="#0b6e2d" stroke-width="2.5"/></svg>
<div style="left:119px;top:289px;width:110px;height:33px;border:3px solid #1a73e8"></div>
<div style="left:221.5px;top:315px;width:14.0px;height:14px;background:#0b57d0;border-radius:50%;border:1px solid #fff"></div>
<div style="left:64px;top:200px;width:1822px;height:34px;background:#fff"></div>
<div style="left:120px;top:200px;width:108px;height:34px;background:#d3e3fd"></div>
<div style="left:0px;top:199px;width:1886px;height:1px;background:#c8c8c8"></div>
<div class="hl" style="left:0px;top:233.5px;width:1886px;height:2.0px;"></div>
<div class="hl" style="left:119px;top:200px;width:2px;height:35px;"></div>
<div class="t" style="left:64px;top:208px;width:56px;height:18px;line-height:18px;font-size:16.5px;text-align:center;color:#444746;">A</div>
<div class="hl" style="left:227px;top:200px;width:2px;height:35px;"></div>
<div class="t" style="left:120px;top:208px;width:108px;height:18px;line-height:18px;font-size:16.5px;text-align:center;color:#041e49;font-weight:700;">B</div>
<div class="hl" style="left:328px;top:200px;width:2px;height:35px;"></div>
<div class="t" style="left:228px;top:208px;width:101px;height:18px;line-height:18px;font-size:16.5px;text-align:center;color:#444746;">C</div>
<div class="hl" style="left:465px;top:200px;width:2px;height:35px;"></div>
<div class="t" style="left:329px;top:208px;width:137px;height:18px;line-height:18px;font-size:16.5px;text-align:center;color:#444746;">D</div>
<div class="hl" style="left:611px;top:200px;width:2px;height:35px;"></div>
<div class="t" style="left:466px;top:208px;width:146px;height:18px;line-height:18px;font-size:16.5px;text-align:center;color:#444746;">E</div>
<div class="hl" style="left:781px;top:200px;width:2px;height:35px;"></div>
<div class="t" style="left:612px;top:208px;width:170px;height:18px;line-height:18px;font-size:16.5px;text-align:center;color:#444746;">F</div>
<div class="hl" style="left:906px;top:200px;width:2px;height:35px;"></div>
<div class="t" style="left:782px;top:208px;width:125px;height:18px;line-height:18px;font-size:16.5px;text-align:center;color:#444746;">G</div>
<div class="hl" style="left:1089px;top:200px;width:2px;height:35px;"></div>
<div class="t" style="left:907px;top:208px;width:183px;height:18px;line-height:18px;font-size:16.5px;text-align:center;color:#444746;">H</div>
<div class="hl" style="left:1157px;top:200px;width:2px;height:35px;"></div>
<div class="t" style="left:1090px;top:208px;width:68px;height:18px;line-height:18px;font-size:16.5px;text-align:center;color:#444746;">I</div>
<div class="hl" style="left:1463px;top:200px;width:2px;height:35px;"></div>
<div class="t" style="left:1158px;top:208px;width:306px;height:18px;line-height:18px;font-size:16.5px;text-align:center;color:#444746;">J</div>
<div class="hl" style="left:1534px;top:200px;width:2px;height:35px;"></div>
<div class="t" style="left:1464px;top:208px;width:71px;height:18px;line-height:18px;font-size:16.5px;text-align:center;color:#444746;">K</div>
<div class="hl" style="left:1593px;top:200px;width:2px;height:35px;"></div>
<div class="t" style="left:1535px;top:208px;width:59px;height:18px;line-height:18px;font-size:16.5px;text-align:center;color:#444746;">L</div>
<div class="hl" style="left:1665px;top:200px;width:2px;height:35px;"></div>
<div class="t" style="left:1594px;top:208px;width:72px;height:18px;line-height:18px;font-size:16.5px;text-align:center;color:#444746;">M</div>
<div class="hl" style="left:1751px;top:200px;width:2px;height:35px;"></div>
<div class="t" style="left:1666px;top:208px;width:86px;height:18px;line-height:18px;font-size:16.5px;text-align:center;color:#444746;">N</div>
<div class="hl" style="left:1861px;top:200px;width:2px;height:35px;"></div>
<div class="t" style="left:1752px;top:208px;width:110px;height:18px;line-height:18px;font-size:16.5px;text-align:center;color:#444746;">O</div>
<div style="left:0px;top:235.5px;width:63px;height:596.5px;background:#fff"></div>
<div style="left:0px;top:289px;width:63px;height:31px;background:#d3e3fd"></div>
<div style="left:62px;top:200px;width:2px;height:632px;background:#c4c4c4"></div>
<div class="hl" style="left:0px;top:288px;width:63px;height:1.5px;"></div>
<div class="t" style="left:0px;top:253px;width:57.5px;height:18px;line-height:18px;font-size:16.5px;text-align:center;color:#444746;">1</div>
<div class="hl" style="left:0px;top:320px;width:63px;height:1.5px;"></div>
<div class="t" style="left:0px;top:296px;width:57.5px;height:18px;line-height:18px;font-size:16.5px;text-align:center;color:#041e49;font-weight:700;">2</div>
<div class="hl" style="left:0px;top:380px;width:63px;height:1.5px;"></div>
<div class="t" style="left:0px;top:342px;width:57.5px;height:18px;line-height:18px;font-size:16.5px;text-align:center;color:#444746;">3</div>
<div class="hl" style="left:0px;top:412px;width:63px;height:1.5px;"></div>
<div class="t" style="left:0px;top:388px;width:57.5px;height:18px;line-height:18px;font-size:16.5px;text-align:center;color:#444746;">4</div>
<div class="hl" style="left:0px;top:444px;width:63px;height:1.5px;"></div>
<div class="t" style="left:0px;top:420px;width:57.5px;height:18px;line-height:18px;font-size:16.5px;text-align:center;color:#444746;">5</div>
<div class="hl" style="left:0px;top:476px;width:63px;height:1.5px;"></div>
<div class="t" style="left:0px;top:452px;width:57.5px;height:18px;line-height:18px;font-size:16.5px;text-align:center;color:#444746;">6</div>
<div class="hl" style="left:0px;top:508px;width:63px;height:1.5px;"></div>
<div class="t" style="left:0px;top:484px;width:57.5px;height:18px;line-height:18px;font-size:16.5px;text-align:center;color:#444746;">7</div>
<div class="hl" style="left:0px;top:540px;width:63px;height:1.5px;"></div>
<div class="t" style="left:0px;top:516px;width:57.5px;height:18px;line-height:18px;font-size:16.5px;text-align:center;color:#444746;">8</div>
<div class="hl" style="left:0px;top:572px;width:63px;height:1.5px;"></div>
<div class="t" style="left:0px;top:548px;width:57.5px;height:18px;line-height:18px;font-size:16.5px;text-align:center;color:#444746;">9</div>
<div class="hl" style="left:0px;top:604px;width:63px;height:1.5px;"></div>
<div class="t" style="left:0px;top:580px;width:57.5px;height:18px;line-height:18px;font-size:16.5px;text-align:center;color:#444746;">10</div>
<div class="hl" style="left:0px;top:636px;width:63px;height:1.5px;"></div>
<div class="t" style="left:0px;top:612px;width:57.5px;height:18px;line-height:18px;font-size:16.5px;text-align:center;color:#444746;">11</div>
<div class="hl" style="left:0px;top:668px;width:63px;height:1.5px;"></div>
<div class="t" style="left:0px;top:644px;width:57.5px;height:18px;line-height:18px;font-size:16.5px;text-align:center;color:#444746;">12</div>
<div class="hl" style="left:0px;top:700px;width:63px;height:1.5px;"></div>
<div class="t" style="left:0px;top:676px;width:57.5px;height:18px;line-height:18px;font-size:16.5px;text-align:center;color:#444746;">13</div>
<div class="hl" style="left:0px;top:732px;width:63px;height:1.5px;"></div>
<div class="t" style="left:0px;top:708px;width:57.5px;height:18px;line-height:18px;font-size:16.5px;text-align:center;color:#444746;">14</div>
<div class="hl" style="left:0px;top:764px;width:63px;height:1.5px;"></div>
<div class="t" style="left:0px;top:740px;width:57.5px;height:18px;line-height:18px;font-size:16.5px;text-align:center;color:#444746;">15</div>
<div class="hl" style="left:0px;top:796px;width:63px;height:1.5px;"></div>
<div class="t" style="left:0px;top:772px;width:57.5px;height:18px;line-height:18px;font-size:16.5px;text-align:center;color:#444746;">16</div>
<div class="hl" style="left:0px;top:828px;width:63px;height:1.5px;"></div>
<div class="t" style="left:0px;top:804px;width:57.5px;height:18px;line-height:18px;font-size:16.5px;text-align:center;color:#444746;">17</div>
<div style="left:0px;top:200px;width:63px;height:35.5px;background:#c0c0c0"></div>
<div style="left:0px;top:200px;width:57px;height:29px;background:#f8f9fa"></div>
</div>
<div style="left:1885px;top:199px;width:18px;height:1px;background:#c8c8c8"></div>
<div style="left:1885px;top:200px;width:18px;height:632px;background:#fff;border-left:1.5px solid #e4e4e4"></div>
<div style="left:1885px;top:200px;width:18px;height:35px;background:#f8f9fa;border-left:1.5px solid #dadce0;border-bottom:1px solid #dadce0"></div>
<div style="left:1888.5px;top:237px;width:13.5px;height:61px;background:#dadce0;border-radius:7px"></div>
<div style="left:1886px;top:786px;width:17px;height:23.5px;background:#f8f8f8;border:1px solid #e6e6e6"></div>
<div style="left:1886px;top:808.5px;width:17px;height:24.0px;background:#f8f8f8;border:1px solid #e6e6e6"></div>
<svg class="i" style="left:1890.4px;top:793.7px" width="7.7" height="4.4" viewBox="0 0 10 6" preserveAspectRatio="none"><path d="M0 6L5 0 10 6Z" fill="#b7b7b7"/></svg>
<svg class="i" style="left:1890.4px;top:818.8px" width="7.7" height="4.4" viewBox="0 0 10 6" preserveAspectRatio="none"><path d="M0 0L5 6 10 0Z" fill="#b7b7b7"/></svg>
<div style="left:1886px;top:808px;width:10px;height:1.5px;background:#a8c7fa"></div>
<div style="left:0px;top:832px;width:1903px;height:20px;background:#fff;border-top:1px solid #dcdcdc;border-bottom:1.5px solid #e0e0e0"></div>
<div style="left:0px;top:833px;width:63px;height:18px;background:#f8f9fa"></div>
<div class="hl" style="left:62.5px;top:832px;width:1.5px;height:19px;"></div>
<div style="left:66px;top:835px;width:1177px;height:14px;background:#dadce0;border-radius:7px"></div>
<div style="left:1840px;top:832px;width:24px;height:18px;background:#f8f8f8;border:1px solid #e6e6e6"></div>
<div style="left:1863px;top:832px;width:24px;height:18px;background:#f8f8f8;border:1px solid #e6e6e6"></div>
<div style="left:1886px;top:832px;width:17px;height:18px;background:#f8f8f8;border:1px solid #e6e6e6"></div>
<svg class="i" style="left:1847px;top:837.8px" width="5.3" height="6.8" viewBox="0 0 6 10" preserveAspectRatio="none"><path d="M6 0L0 5 6 10Z" fill="#b7b7b7"/></svg>
<svg class="i" style="left:1873px;top:837.8px" width="5.3" height="6.8" viewBox="0 0 6 10" preserveAspectRatio="none"><path d="M0 0L6 5 0 10Z" fill="#b7b7b7"/></svg>
<div style="left:0px;top:852px;width:1903px;height:33px;background:#f9fbfd"></div>
<div style="left:80px;top:877px;width:15px;height:2px;background:#444746"></div>
<div style="left:86px;top:871px;width:2px;height:14px;background:#444746"></div>
<div style="left:136px;top:872px;width:21px;height:2px;background:#444746"></div>
<div style="left:136px;top:878px;width:21px;height:2px;background:#444746"></div>
<div style="left:136px;top:884px;width:21px;height:1px;background:#444746"></div>
<div style="left:193px;top:852px;width:202px;height:33px;background:#e1e9f7"></div>
<svg class="i" style="left:210.8px;top:865.5px;" width="27" height="27" viewBox="0 0 24 24" fill="#0b57d0"><path d="M18 8h-1V6c0-2.760-2.240-5-5-5S7 3.240 7 6v2H6c-1.100 0-2 .900-2 2v10c0 1.100.900 2 2 2h12c1.100 0 2-.900 2-2V10c0-1.100-.900-2-2-2zm-6 9c-1.100 0-2-.900-2-2s.900-2 2-2 2 .900 2 2-.900 2-2 2zm3.100-9H8.900V6c0-1.710 1.390-3.100 3.100-3.100 1.710 0 3.100 1.390 3.100 3.100v2z"/></svg>
<div class="t" style="left:243px;top:868px;height:25px;line-height:25px;font-size:22.57px;color:#0b57d0;white-space:nowrap;font-weight:700;">Спутники</div>
<svg class="i" style="left:356.95px;top:864.45px;" width="30.5" height="30.5" viewBox="0 0 24 24" fill="#0b57d0"><path d="M7 10l5 5 5-5z"/></svg>
<div style="left:1903px;top:0px;width:2px;height:885px;background:#e6e9ed"></div>
</body></html>
